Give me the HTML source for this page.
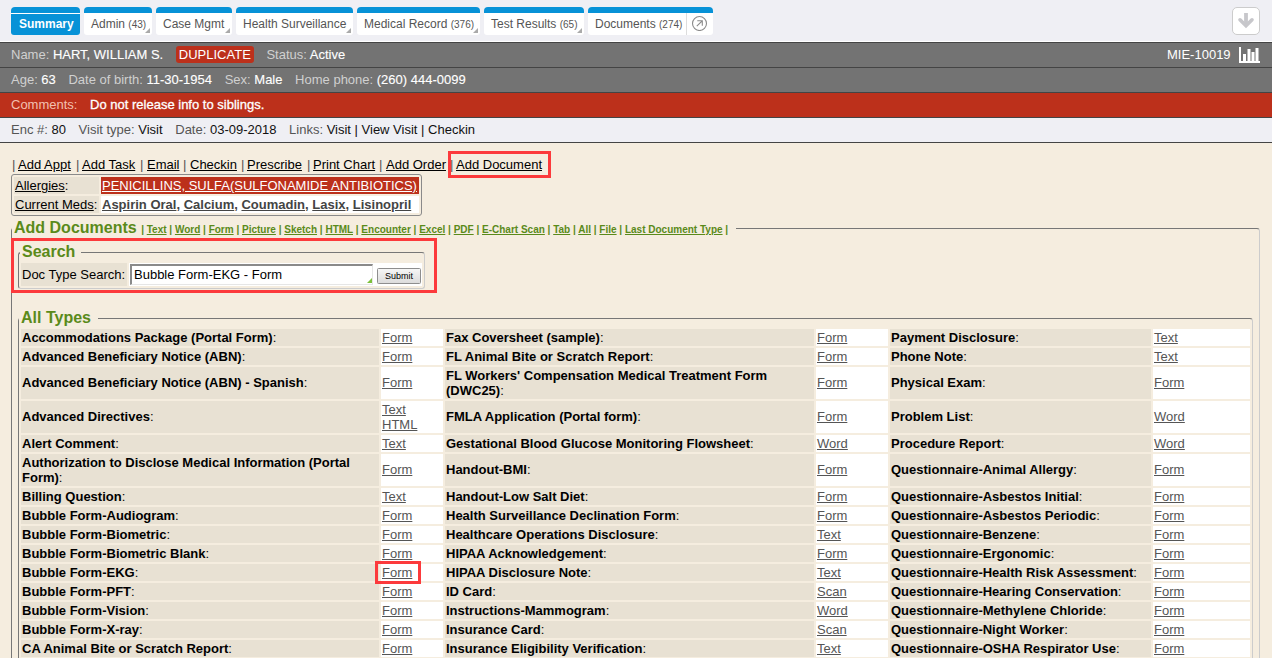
<!DOCTYPE html>
<html><head><meta charset="utf-8">
<style>
*{box-sizing:border-box;}
html,body{margin:0;padding:0;}
body{width:1272px;height:658px;overflow:hidden;position:relative;background:#f5eddf;font-family:"Liberation Sans",sans-serif;font-size:13px;color:#222;}
.abs{position:absolute;}
#top{position:absolute;left:0;top:0;width:1272px;height:42px;background:#efeff4;}
.tab{position:absolute;top:7px;height:28px;background:#fff;border-radius:4px 4px 3px 3px;border-top:6px solid #0792d7;font-size:12px;color:#555;white-space:nowrap;}
.tab .t{position:absolute;left:7px;top:4px;line-height:14px;}
.tab .c{font-size:10px;}
.tab .tri{position:absolute;right:2px;bottom:2px;width:0;height:0;border-left:5px solid transparent;border-bottom:5px solid #aaa;}
.tab.on{background:#0792d7;border-top:0;}
.tab.on .line{position:absolute;left:0;top:6px;width:100%;height:1px;background:#fff;}
.tab.on .t{color:#fff;font-weight:bold;top:10px;left:8px;}
.bar{position:absolute;left:0;width:1272px;height:25px;border-bottom:1px solid #444;white-space:nowrap;line-height:15px;}
.bar .in{position:absolute;left:11px;top:4px;}
.bar span.i{margin-right:9px;}
.g{background:#737373;color:#d0d0d0;}
.g b{font-weight:normal;color:#fff;-webkit-text-stroke:0.12px #fff;}
.links a{color:#222;text-decoration:underline;}
.sep{color:#999;}
.dup{background:#bc301b;color:#fff;border-radius:3px;padding:1px 3px 1px 3px;margin:0 9px 0 0;}


.links13 a{color:#000;text-decoration:underline;}
.sp{color:#555;}
.meds a{text-decoration:underline;}
.redbox{position:absolute;border:3px solid #fc3a3c;}
.cellL{background:#e8e1d3;padding:1px 1px;line-height:15px;white-space:nowrap;color:#000;}
.cellL a{text-decoration:underline;}
.fs{border:1px solid;border-color:#777 #ccc #ccc #777;border-radius:3px;}
.legend{font-size:16px;font-weight:bold;color:#5a8a1a;}
.doclinks{font-size:10px;color:#5a8a1a;}
.doclinks a{text-decoration:underline;}
#inp{background:#fff;border:1px solid #e6e6e6;border-top:2px solid #8a8a8a;border-left:2px solid #8a8a8a;padding:1px 2px;line-height:15px;color:#000;font-size:13px;}
#submit{background:linear-gradient(#f6f6f6,#dcdcdc);border:1px solid #8e8e8e;border-radius:1.5px;font-size:9px;text-align:center;line-height:14px;color:#000;}
#types{border-collapse:separate;border-spacing:2px;table-layout:fixed;width:1233px;}
#types td{padding:1px;line-height:15px;vertical-align:middle;}
#types td.lb{background:#e8e1d3;color:#000;}
#types td.lk{background:#fff;}
#types td.m{padding:0 1px 2px 1px;}
#types td.lk a{color:#555;text-decoration:underline;}
</style></head><body>
<div id="top">
  <div class="tab on" style="left:11px;width:69px;"><div class="line"></div><div class="t">Summary</div></div>
  <div class="tab" style="left:84px;width:68px;"><div class="t">Admin <span class="c">(43)</span></div><div class="tri"></div></div>
  <div class="tab" style="left:156px;width:76px;"><div class="t">Case Mgmt</div><div class="tri"></div></div>
  <div class="tab" style="left:236px;width:117px;"><div class="t">Health Surveillance</div><div class="tri"></div></div>
  <div class="tab" style="left:357px;width:123px;"><div class="t">Medical Record <span class="c">(376)</span></div><div class="tri"></div></div>
  <div class="tab" style="left:484px;width:100px;"><div class="t">Test Results <span class="c">(65)</span></div><div class="tri"></div></div>
  <div class="tab" style="left:588px;width:125px;"><div class="t">Documents <span class="c">(274)</span></div><div class="abs" style="left:98px;top:0;width:1px;height:22px;background:#ddd;"></div><svg class="abs" style="left:103px;top:1px;" width="17" height="17" viewBox="0 0 17 17"><circle cx="8.5" cy="9.5" r="7" fill="none" stroke="#8a8a8a" stroke-width="1.1"/><path d="M5.8 12.2L11.2 6.8M6.3 6.7H11.3V11.7" fill="none" stroke="#8a8a8a" stroke-width="1.1"/></svg></div>
  <div class="abs" style="left:1232px;top:7px;width:28px;height:28px;background:#fff;border:1px solid #ccc;border-radius:5px;"><svg class="abs" style="left:0;top:0;" width="26" height="26" viewBox="0 0 26 26"><path d="M13 5V16" stroke="#c7c7cb" stroke-width="3.8" fill="none"/><path d="M7 11.8L13 17.8L19 11.8" stroke="#c7c7cb" stroke-width="3.6" fill="none" stroke-linecap="round" stroke-linejoin="miter"/></svg></div>
</div>
<div style="position:absolute;left:0;top:41px;width:1272px;height:1px;background:#fff;"></div>
<div class="bar g" style="top:42px;border-top:1px solid #444;height:26px;">
  <div class="in" style="top:4px;"><span class="i">Name: <b>HART, WILLIAM S.</b></span> <span class="dup">DUPLICATE</span> <span class="i">Status: <b>Active</b></span></div>
  <div class="abs" style="left:1167px;top:4px;color:#fff;">MIE-10019</div>
  <svg class="abs" style="left:1238px;top:3px;" width="24" height="18" viewBox="0 0 24 18"><path d="M2 1V16H22" stroke="#fff" stroke-width="2" fill="none"/><rect x="5" y="8" width="3" height="7" fill="#fff"/><rect x="9.5" y="3" width="3" height="12" fill="#fff"/><rect x="13.5" y="6" width="3" height="9" fill="#fff"/><rect x="17.5" y="2" width="3" height="13" fill="#fff"/></svg>
</div>
<div class="bar g" style="top:68px;">
  <div class="in"><span class="i">Age: <b>63</b></span> <span class="i">Date of birth: <b>11-30-1954</b></span> <span class="i">Sex: <b>Male</b></span> <span class="i">Home phone: <b>(260) 444-0099</b></span></div>
</div>
<div class="bar" style="top:93px;background:#bc301b;color:#f3c0b0;">
  <div class="in"><span class="i">Comments:</span> <span style="color:#fff;-webkit-text-stroke:0.3px #fff;">Do not release info to siblings.</span></div>
</div>
<div class="bar" style="top:118px;background:#efeff4;color:#555;">
  <div class="in"><span class="i">Enc #: <b style="font-weight:normal;color:#111;">80</b></span> <span class="i">Visit type: <b style="font-weight:normal;color:#111;">Visit</b></span> <span class="i">Date: <b style="font-weight:normal;color:#111;">03-09-2018</b></span> <span class="i">Links: <b style="font-weight:normal;color:#111;">Visit | View Visit | Checkin</b></span></div>
</div>

<div class="abs links13" style="left:0;top:157px;line-height:15px;white-space:nowrap;"><span class="sp abs" style="left:12px;top:0;">|</span><a class="abs" style="left:18px;top:0;">Add Appt</a><span class="sp abs" style="left:76px;top:0;">|</span><a class="abs" style="left:82px;top:0;">Add Task</a><span class="sp abs" style="left:140px;top:0;">|</span><a class="abs" style="left:147px;top:0;">Email</a><span class="sp abs" style="left:183px;top:0;">|</span><a class="abs" style="left:190px;top:0;">Checkin</a><span class="sp abs" style="left:241px;top:0;">|</span><a class="abs" style="left:247px;top:0;">Prescribe</a><span class="sp abs" style="left:307px;top:0;">|</span><a class="abs" style="left:313px;top:0;">Print Chart</a><span class="sp abs" style="left:379px;top:0;">|</span><a class="abs" style="left:386px;top:0;">Add Order</a><span class="sp abs" style="left:450px;top:0;">|</span><a class="abs" style="left:456px;top:0;">Add Document</a></div>
<div class="redbox" style="left:448px;top:151px;width:103px;height:27px;"></div>
<div class="abs" id="allg" style="left:11px;top:174px;width:411px;height:42px;border:1px solid #8a8a8a;border-radius:3px;">
 <div class="abs cellL" style="left:2px;top:2px;width:85px;height:17px;"><a>Allergies</a>:</div>
 <div class="abs" style="left:89px;top:2px;width:318px;height:17px;background:#bc301b;color:#fff;padding:1px 1px;line-height:15px;white-space:nowrap;"><a style="color:#fff;text-decoration:underline;">PENICILLINS, SULFA(SULFONAMIDE ANTIBIOTICS)</a></div>
 <div class="abs cellL" style="left:2px;top:21px;width:85px;height:17px;"><a>Current Meds</a>:</div>
 <div class="abs meds" style="left:89px;top:21px;width:318px;height:17px;background:#fff;color:#444;font-weight:bold;padding:1px 1px;line-height:15px;white-space:nowrap;"><a>Aspirin Oral</a>, <a>Calcium</a>, <a>Coumadin</a>, <a>Lasix</a>, <a>Lisinopril</a></div>
</div>
<div class="abs fs" style="left:11px;top:228px;width:1249px;height:440px;"></div>
<div class="abs legend" style="left:12px;top:219px;padding:0 8px 0 2px;background:#f5eddf;white-space:nowrap;line-height:18px;">Add Documents <span class="doclinks">| <a>Text</a> | <a>Word</a> | <a>Form</a> | <a>Picture</a> | <a>Sketch</a> | <a>HTML</a> | <a>Encounter</a> | <a>Excel</a> | <a>PDF</a> | <a>E-Chart Scan</a> | <a>Tab</a> | <a>All</a> | <a>File</a> | <a>Last Document Type</a> |</span></div>
<div class="abs fs" style="left:18px;top:252px;width:407px;height:37px;"></div>
<div class="abs legend" style="left:20px;top:243px;padding:0 6px 0 2px;background:#f5eddf;line-height:18px;">Search</div>
<div class="abs cellL" style="left:21px;top:263px;width:106px;height:23px;padding:4px 1px 0 1px;">Doc Type Search:</div>
<div class="abs" style="left:129px;top:263px;width:293px;height:23px;background:#fff;"></div>
<div class="abs" id="inp" style="left:130px;top:264px;width:243px;height:21px;">Bubble Form-EKG - Form</div>
<div class="abs" style="left:367px;top:278px;width:0;height:0;border-left:5px solid transparent;border-bottom:5px solid #7cc03a;"></div>
<div class="abs" id="submit" style="left:377px;top:268px;width:44px;height:16px;">Submit</div>
<div class="redbox" style="left:11px;top:238px;width:426px;height:55px;"></div>
<div class="abs fs" style="left:18px;top:318px;width:1235px;height:400px;"></div>
<div class="abs legend" style="left:19px;top:309px;padding:0 7px 0 2px;background:#f5eddf;line-height:18px;">All Types</div>
<div class="abs" style="left:19px;top:327px;">
<table id="types"><colgroup><col style="width:358px"><col style="width:62px"><col style="width:369px"><col style="width:72px"><col style="width:261px"><col style="width:97px"></colgroup>
<tr style="height:17px"><td class="lb"><b>Accommodations Package (Portal Form)</b>:</td><td class="lk"><a>Form</a></td><td class="lb"><b>Fax Coversheet (sample)</b>:</td><td class="lk"><a>Form</a></td><td class="lb"><b>Payment Disclosure</b>:</td><td class="lk"><a>Text</a></td></tr>
<tr style="height:17px"><td class="lb"><b>Advanced Beneficiary Notice (ABN)</b>:</td><td class="lk"><a>Form</a></td><td class="lb"><b>FL Animal Bite or Scratch Report</b>:</td><td class="lk"><a>Form</a></td><td class="lb"><b>Phone Note</b>:</td><td class="lk"><a>Text</a></td></tr>
<tr style="height:32px"><td class="lb m"><b>Advanced Beneficiary Notice (ABN) - Spanish</b>:</td><td class="lk m"><a>Form</a></td><td class="lb"><b>FL Workers' Compensation Medical Treatment Form (DWC25)</b>:</td><td class="lk m"><a>Form</a></td><td class="lb m"><b>Physical Exam</b>:</td><td class="lk m"><a>Form</a></td></tr>
<tr style="height:32px"><td class="lb m"><b>Advanced Directives</b>:</td><td class="lk"><a>Text</a><br><a>HTML</a></td><td class="lb m"><b>FMLA Application (Portal form)</b>:</td><td class="lk m"><a>Form</a></td><td class="lb m"><b>Problem List</b>:</td><td class="lk m"><a>Word</a></td></tr>
<tr style="height:17px"><td class="lb"><b>Alert Comment</b>:</td><td class="lk"><a>Text</a></td><td class="lb"><b>Gestational Blood Glucose Monitoring Flowsheet</b>:</td><td class="lk"><a>Word</a></td><td class="lb"><b>Procedure Report</b>:</td><td class="lk"><a>Word</a></td></tr>
<tr style="height:32px"><td class="lb"><b>Authorization to Disclose Medical Information (Portal Form)</b>:</td><td class="lk m"><a>Form</a></td><td class="lb m"><b>Handout-BMI</b>:</td><td class="lk m"><a>Form</a></td><td class="lb m"><b>Questionnaire-Animal Allergy</b>:</td><td class="lk m"><a>Form</a></td></tr>
<tr style="height:17px"><td class="lb"><b>Billing Question</b>:</td><td class="lk"><a>Text</a></td><td class="lb"><b>Handout-Low Salt Diet</b>:</td><td class="lk"><a>Form</a></td><td class="lb"><b>Questionnaire-Asbestos Initial</b>:</td><td class="lk"><a>Form</a></td></tr>
<tr style="height:17px"><td class="lb"><b>Bubble Form-Audiogram</b>:</td><td class="lk"><a>Form</a></td><td class="lb"><b>Health Surveillance Declination Form</b>:</td><td class="lk"><a>Form</a></td><td class="lb"><b>Questionnaire-Asbestos Periodic</b>:</td><td class="lk"><a>Form</a></td></tr>
<tr style="height:17px"><td class="lb"><b>Bubble Form-Biometric</b>:</td><td class="lk"><a>Form</a></td><td class="lb"><b>Healthcare Operations Disclosure</b>:</td><td class="lk"><a>Text</a></td><td class="lb"><b>Questionnaire-Benzene</b>:</td><td class="lk"><a>Form</a></td></tr>
<tr style="height:17px"><td class="lb"><b>Bubble Form-Biometric Blank</b>:</td><td class="lk"><a>Form</a></td><td class="lb"><b>HIPAA Acknowledgement</b>:</td><td class="lk"><a>Form</a></td><td class="lb"><b>Questionnaire-Ergonomic</b>:</td><td class="lk"><a>Form</a></td></tr>
<tr style="height:17px"><td class="lb"><b>Bubble Form-EKG</b>:</td><td class="lk"><a>Form</a></td><td class="lb"><b>HIPAA Disclosure Note</b>:</td><td class="lk"><a>Text</a></td><td class="lb"><b>Questionnaire-Health Risk Assessment</b>:</td><td class="lk"><a>Form</a></td></tr>
<tr style="height:17px"><td class="lb"><b>Bubble Form-PFT</b>:</td><td class="lk"><a>Form</a></td><td class="lb"><b>ID Card</b>:</td><td class="lk"><a>Scan</a></td><td class="lb"><b>Questionnaire-Hearing Conservation</b>:</td><td class="lk"><a>Form</a></td></tr>
<tr style="height:17px"><td class="lb"><b>Bubble Form-Vision</b>:</td><td class="lk"><a>Form</a></td><td class="lb"><b>Instructions-Mammogram</b>:</td><td class="lk"><a>Word</a></td><td class="lb"><b>Questionnaire-Methylene Chloride</b>:</td><td class="lk"><a>Form</a></td></tr>
<tr style="height:17px"><td class="lb"><b>Bubble Form-X-ray</b>:</td><td class="lk"><a>Form</a></td><td class="lb"><b>Insurance Card</b>:</td><td class="lk"><a>Scan</a></td><td class="lb"><b>Questionnaire-Night Worker</b>:</td><td class="lk"><a>Form</a></td></tr>
<tr style="height:17px"><td class="lb"><b>CA Animal Bite or Scratch Report</b>:</td><td class="lk"><a>Form</a></td><td class="lb"><b>Insurance Eligibility Verification</b>:</td><td class="lk"><a>Text</a></td><td class="lb"><b>Questionnaire-OSHA Respirator Use</b>:</td><td class="lk"><a>Form</a></td></tr>
</table>
</div>
<div class="redbox" style="left:375px;top:561px;width:46px;height:23px;"></div>
</body></html>
